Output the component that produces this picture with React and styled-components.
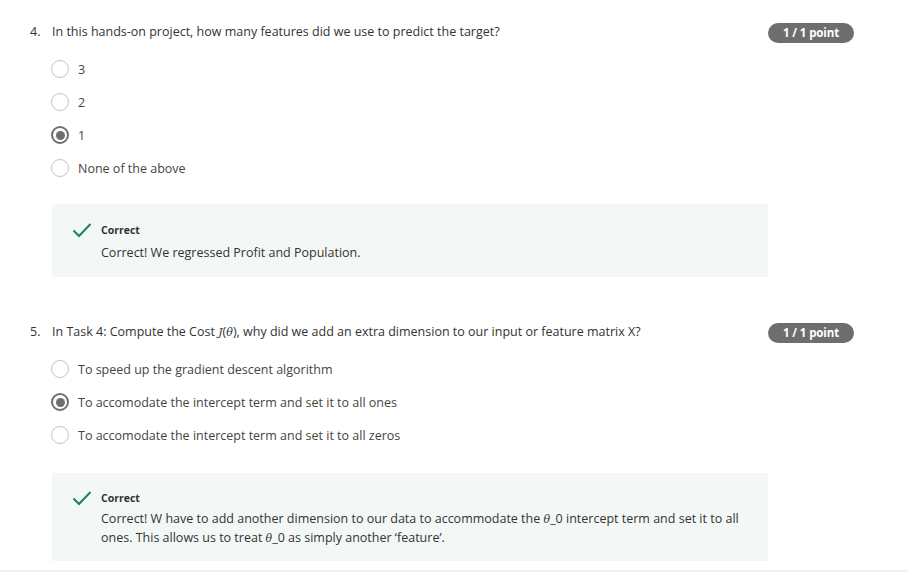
import React from "react";
import styled, { createGlobalStyle } from "styled-components";

const Global = createGlobalStyle`
  html, body { margin: 0; padding: 0; background: #fff; }
  body { font-family: "Open Sans", "Noto Sans", sans-serif; color: #333; }
`;

const Page = styled.div`
  width: 907px;
  height: 572px;
  box-sizing: border-box;
  border-bottom: 2px solid #f0f0f0;
  padding: 20px 53px 0 30px;
  display: flex;
  flex-direction: column;
`;

const Question = styled.section`
  display: flex;
  flex-direction: column;
  margin-bottom: ${(p) => p.$gap || 0}px;
`;

const QRow = styled.div`
  display: flex;
  align-items: center;
  height: 22px;
`;

const QNum = styled.span`
  width: 22px;
  font-size: 12.5px;
  color: #333;
`;

const QText = styled.span`
  flex: 1;
  font-size: 12.5px;
  color: #333;
  em { font-family: "DejaVu Serif", serif; font-size: 11px; }
`;

const Badge = styled.span`
  background: #6e6e6e;
  color: #fff;
  font-size: 11.5px;
  font-weight: 700;
  border-radius: 10px;
  width: 86px;
  height: 20px;
  display: flex;
  align-items: center;
  justify-content: center;
  letter-spacing: -0.1px;
  margin-top: 3px;
`;

const Options = styled.div`
  display: flex;
  flex-direction: column;
  gap: ${(p) => p.$gap}px;
  padding-left: 21px;
  margin-top: ${(p) => p.$top}px;
`;

const Option = styled.label`
  display: flex;
  align-items: center;
  gap: 9px;
  height: 18px;
  font-size: 12.5px;
  color: #444;
`;

const Radio = styled.span`
  width: 18px;
  height: 18px;
  box-sizing: border-box;
  border-radius: 50%;
  border: ${(p) => (p.$checked ? "2px solid #6f6f6f" : "1.5px solid #c4c4c4")};
  display: flex;
  align-items: center;
  justify-content: center;
  &::after {
    content: "";
    display: ${(p) => (p.$checked ? "block" : "none")};
    width: 9px;
    height: 9px;
    border-radius: 50%;
    background: #6f6f6f;
  }
`;

const Feedback = styled.div`
  margin-left: 22px;
  width: 716px;
  box-sizing: border-box;
  background: #f3f8f6;
  margin-top: ${(p) => p.$top}px;
  padding: ${(p) => p.$pad};
  display: flex;
  gap: 9px;
`;

const Check = styled.svg`
  width: 20px;
  height: 20px;
  flex: none;
  margin-top: -3px;
`;

const FBody = styled.div`
  display: flex;
  flex-direction: column;
`;

const FTitle = styled.div`
  font-size: 10.5px;
  font-weight: 700;
  color: #333;
  line-height: 14px;
  margin-bottom: ${(p) => p.$space}px;
`;

const FText = styled.div`
  font-size: 12.5px;
  color: #333;
  line-height: 18px;
  em { font-family: "DejaVu Serif", serif; font-size: 11px; }
`;

const CheckIcon = () => (
  <Check viewBox="0 0 20 20">
    <path d="M1.5 10.5 L7 16 L18.5 4" fill="none" stroke="#1f8354" strokeWidth="2" />
  </Check>
);

export default function App() {
  return (
    <>
      <Global />
      <Page>
        <Question $gap={43}>
          <QRow>
            <QNum>4.</QNum>
            <QText>In this hands-on project, how many features did we use to predict the target?</QText>
            <Badge>1 / 1 point</Badge>
          </QRow>
          <Options $gap={15} $top={18}>
            <Option><Radio />3</Option>
            <Option><Radio />2</Option>
            <Option><Radio $checked />1</Option>
            <Option><Radio />None of the above</Option>
          </Options>
          <Feedback $top={27} $pad="19px 20px 15px">
            <CheckIcon />
            <FBody>
              <FTitle $space={7}>Correct</FTitle>
              <FText>Correct! We regressed Profit and Population.</FText>
            </FBody>
          </Feedback>
        </Question>
        <Question>
          <QRow>
            <QNum>5.</QNum>
            <QText>In Task 4: Compute the Cost <em>J</em>(<em>θ</em>), why did we add an extra dimension to our input or feature matrix X?</QText>
            <Badge>1 / 1 point</Badge>
          </QRow>
          <Options $gap={15} $top={18}>
            <Option><Radio />To speed up the gradient descent algorithm</Option>
            <Option><Radio $checked />To accomodate the intercept term and set it to all ones</Option>
            <Option><Radio />To accomodate the intercept term and set it to all zeros</Option>
          </Options>
          <Feedback $top={29} $pad="18px 20px 13px">
            <CheckIcon />
            <FBody>
              <FTitle $space={5}>Correct</FTitle>
              <FText>
                Correct! W have to add another dimension to our data to accommodate the <em>θ</em>_0 intercept term and set it to all ones. This allows us to treat <em>θ</em>_0 as simply another ‘feature’.
              </FText>
            </FBody>
          </Feedback>
        </Question>
      </Page>
    </>
  );
}
